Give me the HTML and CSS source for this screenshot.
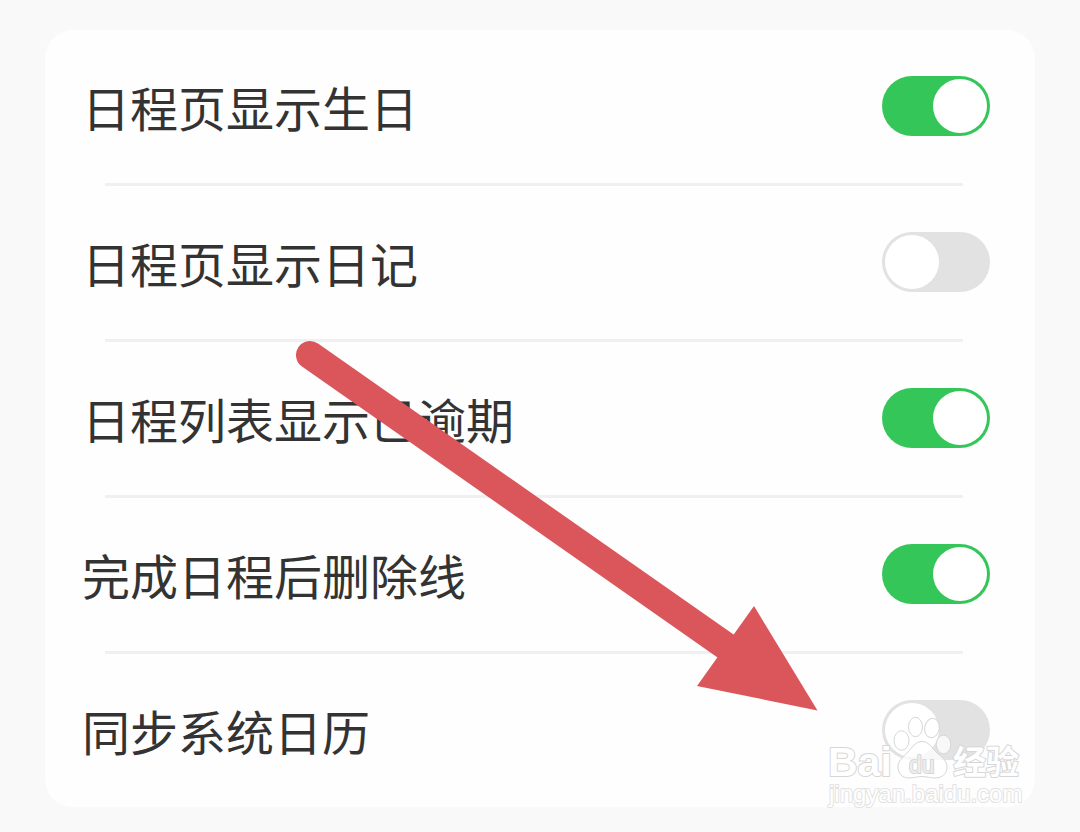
FILE: index.html
```html
<!DOCTYPE html>
<html lang="zh-CN">
  <head>
    <meta charset="UTF-8" />
    <meta name="viewport" content="width=device-width, initial-scale=1.0" />
    <title>日程设置</title>
    <link rel="stylesheet" href="styles.css">
  </head>
  <body>
    <main class="card">
      <ul class="list">
        <li class="item">
          <label class="row" for="birthday">
            <span class="name">日程页显示生日</span>
            <input class="switch" type="checkbox" id="birthday" checked />
          </label>
        </li>
        <li class="item">
          <label class="row" for="diary">
            <span class="name">日程页显示日记</span>
            <input class="switch" type="checkbox" id="diary" />
          </label>
        </li>
        <li class="item">
          <label class="row" for="overdue">
            <span class="name">日程列表显示已逾期</span>
            <input class="switch" type="checkbox" id="overdue" checked />
          </label>
        </li>
        <li class="item">
          <label class="row" for="strike">
            <span class="name">完成日程后删除线</span>
            <input class="switch" type="checkbox" id="strike" checked />
          </label>
        </li>
        <li class="item">
          <label class="row" for="sync">
            <span class="name">同步系统日历</span>
            <input class="switch" type="checkbox" id="sync" />
          </label>
        </li>
      </ul>

      <!-- arrow pointing at the last switch -->
      <svg class="arrow" width="524" height="372" viewBox="295 340 524 372" aria-hidden="true">
        <path d="M310 355L727 647" fill="none" stroke="#db565b" stroke-width="28" stroke-linecap="round" />
        <path d="M754 606L817.500 710.500L697 686Z" fill="#db565b" />
      </svg>

      <!-- watermark -->
      <svg class="mark" width="200" height="110" viewBox="826 704 200 110">
        <g class="paw">
          <ellipse cx="901.500" cy="740.500" rx="7.500" ry="9.700" />
          <ellipse cx="915.500" cy="727" rx="7" ry="9.700" />
          <ellipse cx="932" cy="728" rx="7.300" ry="9.700" transform="rotate(10 932 728)" />
          <ellipse cx="943.500" cy="744.500" rx="7.300" ry="9.300" />
          <path d="M922 741.500C929 741.500 932 748 937 753C942 757 947 761 947 767C947 774 942 778 935 778C930 778 927 776.500 922 776.500C917 776.500 914 778 909 778C902 778 898 773 898 767C898 761 903 757 908 752C912 748 915 741.500 922 741.500Z" />
        </g>
        <text class="logo" x="828" y="776">Bai</text>
        <text class="du" x="909" y="773">du</text>
        <text class="cn" x="953" y="774">经验</text>
        <text class="site" x="829" y="802">jingyan.baidu.com</text>
      </svg>
    </main>
  </body>
</html>
```

FILE: styles.css
```css
* {
  margin: 0;
  padding: 0;
  box-sizing: border-box;
}
body {
  padding: 30px 45px 24px;
  background-color: #f9f9f9;
  font-family: "Noto Sans CJK SC", sans-serif;
  color: #333;
}
.card {
  position: relative;
  border-radius: 28px;
  background-color: #fefefe;
}
.list {
  list-style: none;
}
.item + .item::before {
  content: "";
  display: block;
  height: 3px;
  margin: 0 72px 0 60px;
  background-color: #f0f0f0;
}
.row {
  display: flex;
  align-items: center;
  justify-content: space-between;
  padding: 40px 45px 41px 37px;
}
.name {
  font-size: 48px;
  line-height: 72px;
}
.switch {
  appearance: none;
  flex: none;
  width: 108px;
  height: 60px;
  padding: 3px;
  border-radius: 30px;
  background-color: #e2e2e2;
}
.switch::before {
  content: "";
  display: block;
  width: 54px;
  height: 54px;
  border-radius: 50%;
  background-color: #fff;
}
.switch:checked {
  background-color: #35c65a;
}
.switch:checked::before {
  margin-left: auto;
}
.arrow {
  position: absolute;
  top: 310px;
  right: 216px;
  pointer-events: none;
}
.mark {
  position: absolute;
  right: 9px;
  bottom: -7px;
  overflow: visible;
  pointer-events: none;
}
.paw {
  fill: rgba(255, 255, 255, 0.75);
  stroke: #d6d6d6;
  stroke-width: 1px;
}
.mark text {
  font-family: "Liberation Sans", "Noto Sans CJK SC", sans-serif;
  fill: #fff;
  stroke: #d6d6d6;
  stroke-width: 2px;
  stroke-linejoin: round;
  paint-order: stroke;
}
.mark .logo {
  font-size: 41px;
  font-weight: bold;
}
.mark .du {
  font-size: 23px;
  fill: #eee;
}
.mark .cn {
  font-size: 33px;
  font-weight: bold;
}
.mark .site {
  font-size: 24px;
  stroke: #e2e2e2;
}
```
